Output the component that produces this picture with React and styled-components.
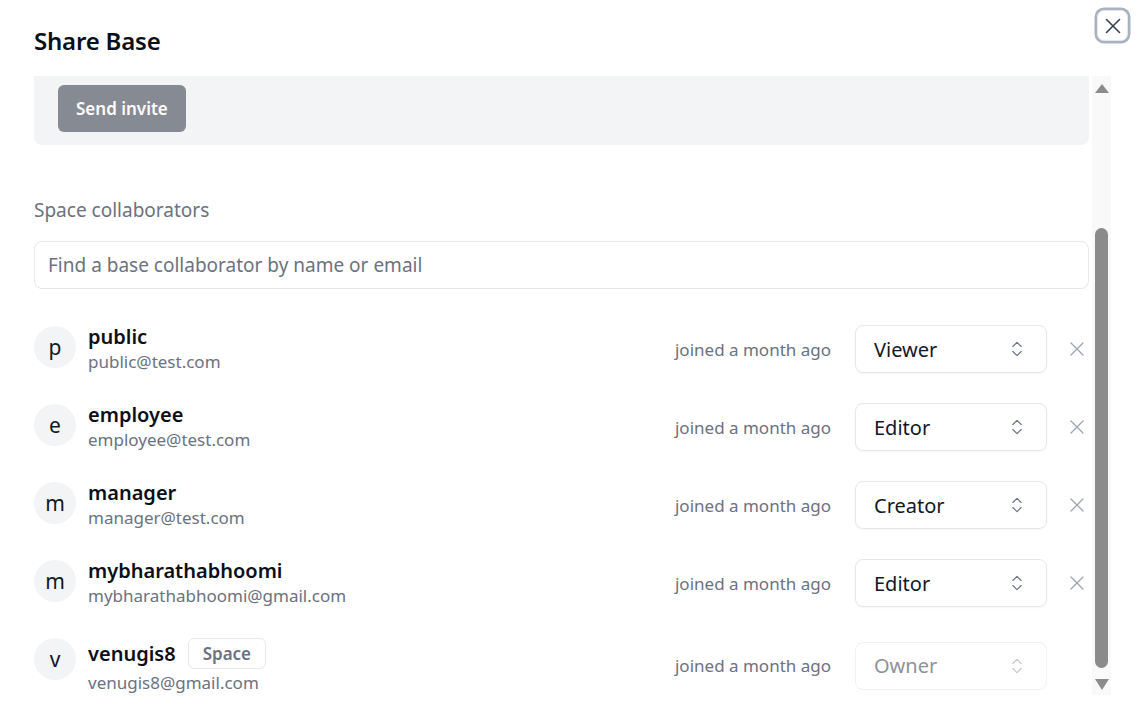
import React from "react";
import styled, { createGlobalStyle } from "styled-components";
import { X, ChevronsUpDown } from "lucide-react";

const GlobalStyle = createGlobalStyle`
  html, body {
    margin: 0;
    padding: 0;
    background: #ffffff;
    font-family: "Noto Sans", "Open Sans", sans-serif;
    color: #111827;
  }
  * { box-sizing: border-box; }
`;

const Dialog = styled.div`
  position: relative;
  width: 1142px;
  height: 718px;
  padding: 25px 31px 23px 34px;
  display: flex;
  flex-direction: column;
  gap: 19px;
  overflow: hidden;
`;

const Title = styled.h2`
  margin: 0;
  font-size: 24px;
  line-height: 32px;
  font-weight: 600;
  letter-spacing: -0.2px;
  color: #0b0f19;
`;

const CloseButton = styled.button`
  position: absolute;
  top: 10px;
  right: 14px;
  width: 31px;
  height: 31px;
  display: flex;
  align-items: center;
  justify-content: center;
  padding: 0;
  background: #fff;
  border: 1px solid #e5e7eb;
  border-radius: 7px;
  box-shadow: 0 0 0 2.5px #aab1bf;
  color: #374151;
  cursor: pointer;
`;

const Body = styled.div`
  flex: 1;
  display: flex;
  gap: 3px;
  min-height: 0;
`;

const Viewport = styled.div`
  flex: 1;
  overflow: hidden;
  display: flex;
  flex-direction: column;
  & > * { flex-shrink: 0; }
`;

const InviteBox = styled.div`
  background: #f3f4f6;
  border-radius: 0 0 8px 8px;
  padding: 9px 24px 13px;
`;

const PrimaryButton = styled.button`
  height: 47px;
  padding: 0 18px;
  border: none;
  border-radius: 6px;
  background: #868a93;
  color: #fff;
  font-family: inherit;
  font-size: 17px;
  font-weight: 600;
  cursor: default;
`;

const SectionLabel = styled.div`
  margin-top: 52px;
  font-size: 19px;
  line-height: 26px;
  color: #6b7280;
`;

const SearchInput = styled.input`
  margin-top: 18px;
  height: 48px;
  width: 100%;
  border: 1px solid #e5e7eb;
  border-radius: 8px;
  padding: 0 13px;
  font-family: inherit;
  font-size: 19px;
  color: #111827;
  outline: none;
  &::placeholder { color: #6b7280; }
`;

const List = styled.div`
  margin-top: 35px;
  display: flex;
  flex-direction: column;
  gap: 28px;
`;

const Row = styled.div`
  display: flex;
  align-items: center;
  min-height: 50px;
`;

const Person = styled.div`
  flex: 1;
  display: flex;
  align-items: flex-start;
  gap: 12px;
`;

const Avatar = styled.div`
  width: 42px;
  height: 42px;
  margin-top: 2px;
  border-radius: 50%;
  background: #f3f4f6;
  display: flex;
  align-items: center;
  justify-content: center;
  font-size: 21px;
  color: #111827;
`;

const Info = styled.div`
  display: flex;
  flex-direction: column;
`;

const NameLine = styled.div`
  display: flex;
  align-items: center;
  gap: 12px;
  min-height: ${(p) => (p.$tall ? "35px" : "26px")};
`;

const Name = styled.span`
  font-size: 20px;
  line-height: 26px;
  font-weight: 600;
  color: #0b0f19;
`;

const Badge = styled.span`
  height: 31px;
  padding: 0 14px;
  display: inline-flex;
  align-items: center;
  border: 1px solid #e5e7eb;
  border-radius: 6px;
  font-size: 17px;
  font-weight: 600;
  color: #6b7280;
`;

const Email = styled.span`
  font-size: 17px;
  line-height: 24px;
  color: #6b7280;
`;

const Joined = styled.span`
  font-size: 17px;
  color: #6b7280;
  margin-right: 24px;
`;

const Select = styled.div`
  width: 192px;
  height: 48px;
  display: flex;
  align-items: center;
  justify-content: space-between;
  padding: 0 19px 0 18px;
  border: 1px solid ${(p) => (p.$disabled ? "#f0f1f3" : "#e5e7eb")};
  border-radius: 8px;
  font-size: 20px;
  color: ${(p) => (p.$disabled ? "#8d929b" : "#111827")};
  box-shadow: ${(p) => (p.$disabled ? "none" : "0 1px 2px rgba(0,0,0,0.04)")};
  svg { color: ${(p) => (p.$disabled ? "#c4c8ce" : "#6b7280")}; }
`;

const RemoveButton = styled.button`
  width: 24px;
  height: 24px;
  margin-left: 18px;
  padding: 0;
  border: none;
  background: none;
  display: flex;
  align-items: center;
  justify-content: center;
  color: #9ca3af;
  visibility: ${(p) => (p.$hidden ? "hidden" : "visible")};
`;

const ScrollTrack = styled.div`
  width: 19px;
  background: #f9f9f9;
  display: flex;
  flex-direction: column;
  align-items: center;
  padding: 8px 0 5px;
`;

const Arrow = styled.div`
  width: 0;
  height: 0;
  border-left: 7px solid transparent;
  border-right: 7px solid transparent;
  ${(p) =>
    p.$down
      ? "border-top: 11px solid #8b8b8b; margin-top: 11px;"
      : "border-bottom: 9px solid #8b8b8b;"}
`;

const Thumb = styled.div`
  width: 13px;
  height: 440px;
  margin-top: 135px;
  border-radius: 7px;
  background: #8b8b8b;
`;

const people = [
  { letter: "p", name: "public", email: "public@test.com", role: "Viewer" },
  { letter: "e", name: "employee", email: "employee@test.com", role: "Editor" },
  { letter: "m", name: "manager", email: "manager@test.com", role: "Creator" },
  { letter: "m", name: "mybharathabhoomi", email: "mybharathabhoomi@gmail.com", role: "Editor" },
  { letter: "v", name: "venugis8", email: "venugis8@gmail.com", role: "Owner", owner: true },
];

export default function App() {
  return (
    <>
      <GlobalStyle />
      <Dialog>
        <Title>Share Base</Title>
        <CloseButton aria-label="Close">
          <X size={26} strokeWidth={1.5} />
        </CloseButton>
        <Body>
          <Viewport>
            <InviteBox>
              <PrimaryButton>Send invite</PrimaryButton>
            </InviteBox>
            <SectionLabel>Space collaborators</SectionLabel>
            <SearchInput placeholder="Find a base collaborator by name or email" />
            <List>
              {people.map((p) => (
                <Row key={p.email}>
                  <Person>
                    <Avatar>{p.letter}</Avatar>
                    <Info>
                      <NameLine $tall={p.owner}>
                        <Name>{p.name}</Name>
                        {p.owner && <Badge>Space</Badge>}
                      </NameLine>
                      <Email>{p.email}</Email>
                    </Info>
                  </Person>
                  <Joined>joined a month ago</Joined>
                  <Select $disabled={p.owner}>
                    <span>{p.role}</span>
                    <ChevronsUpDown size={20} strokeWidth={1.4} />
                  </Select>
                  <RemoveButton $hidden={p.owner} aria-label="Remove">
                    <X size={28} strokeWidth={1.3} />
                  </RemoveButton>
                </Row>
              ))}
            </List>
          </Viewport>
          <ScrollTrack>
            <Arrow />
            <Thumb />
            <Arrow $down />
          </ScrollTrack>
        </Body>
      </Dialog>
    </>
  );
}
